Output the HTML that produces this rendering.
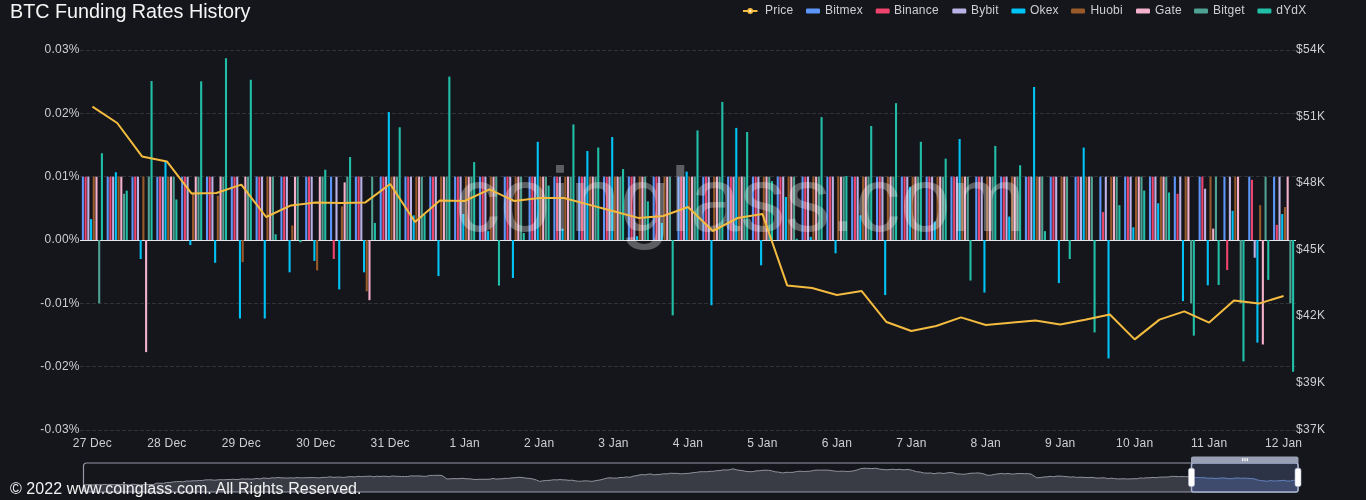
<!DOCTYPE html>
<html lang="en"><head><meta charset="utf-8"><title>BTC Funding Rates History</title>
<style>html,body{margin:0;padding:0;background:#15161b;}body{width:1366px;height:500px;overflow:hidden;position:relative;font-family:"Liberation Sans", Arial, sans-serif;}svg{position:absolute;left:0;top:0;display:block;}#w{position:absolute;left:0;top:0;width:1366px;height:500px;will-change:transform;}text{font-family:"Liberation Sans", Arial, sans-serif;}.ft{position:absolute;left:10px;top:479.5px;font-size:16px;letter-spacing:0.06px;line-height:18px;color:#f2f2f2;white-space:nowrap;}</style></head><body><div id="w">
<svg width="1366" height="500" viewBox="0 0 1366 500">
<rect width="1366" height="500" fill="#15161b"/>
<text x="10" y="18" font-size="19.75" fill="#f6f6f6">BTC Funding Rates History</text>
<line x1="80" x2="1296" y1="50.5" y2="50.5" stroke="#303238" stroke-width="1" stroke-dasharray="4 2" shape-rendering="crispEdges"/>
<line x1="80" x2="1296" y1="113.5" y2="113.5" stroke="#303238" stroke-width="1" stroke-dasharray="4 2" shape-rendering="crispEdges"/>
<line x1="80" x2="1296" y1="176.5" y2="176.5" stroke="#303238" stroke-width="1" stroke-dasharray="4 2" shape-rendering="crispEdges"/>
<line x1="80" x2="1296" y1="303.5" y2="303.5" stroke="#303238" stroke-width="1" stroke-dasharray="4 2" shape-rendering="crispEdges"/>
<line x1="80" x2="1296" y1="366.5" y2="366.5" stroke="#303238" stroke-width="1" stroke-dasharray="4 2" shape-rendering="crispEdges"/>
<line x1="80" x2="1296" y1="430.5" y2="430.5" stroke="#303238" stroke-width="1" stroke-dasharray="4 2" shape-rendering="crispEdges"/>
<text x="79.8" y="52.9" font-size="12" fill="#cfcfd2" text-anchor="end" letter-spacing="0.25">0.03%</text>
<text x="1296" y="52.9" font-size="12" fill="#cfcfd2" letter-spacing="0.3">$54K</text>
<text x="79.8" y="116.9" font-size="12" fill="#cfcfd2" text-anchor="end" letter-spacing="0.25">0.02%</text>
<text x="1296" y="119.9" font-size="12" fill="#cfcfd2" letter-spacing="0.3">$51K</text>
<text x="79.8" y="179.9" font-size="12" fill="#cfcfd2" text-anchor="end" letter-spacing="0.25">0.01%</text>
<text x="1296" y="185.9" font-size="12" fill="#cfcfd2" letter-spacing="0.3">$48K</text>
<text x="79.8" y="242.9" font-size="12" fill="#cfcfd2" text-anchor="end" letter-spacing="0.25">0.00%</text>
<text x="1296" y="252.9" font-size="12" fill="#cfcfd2" letter-spacing="0.3">$45K</text>
<text x="79.8" y="306.9" font-size="12" fill="#cfcfd2" text-anchor="end" letter-spacing="0.25">-0.01%</text>
<text x="1296" y="318.9" font-size="12" fill="#cfcfd2" letter-spacing="0.3">$42K</text>
<text x="79.8" y="369.9" font-size="12" fill="#cfcfd2" text-anchor="end" letter-spacing="0.25">-0.02%</text>
<text x="1296" y="385.9" font-size="12" fill="#cfcfd2" letter-spacing="0.3">$39K</text>
<text x="79.8" y="432.9" font-size="12" fill="#cfcfd2" text-anchor="end" letter-spacing="0.25">-0.03%</text>
<text x="1296" y="432.9" font-size="12" fill="#cfcfd2" letter-spacing="0.3">$37K</text>
<text x="92.41" y="446.5" font-size="12" fill="#cfcfd2" text-anchor="middle" letter-spacing="0.2">27 Dec</text>
<text x="166.86" y="446.5" font-size="12" fill="#cfcfd2" text-anchor="middle" letter-spacing="0.2">28 Dec</text>
<text x="241.31" y="446.5" font-size="12" fill="#cfcfd2" text-anchor="middle" letter-spacing="0.2">29 Dec</text>
<text x="315.76" y="446.5" font-size="12" fill="#cfcfd2" text-anchor="middle" letter-spacing="0.2">30 Dec</text>
<text x="390.2" y="446.5" font-size="12" fill="#cfcfd2" text-anchor="middle" letter-spacing="0.2">31 Dec</text>
<text x="464.65" y="446.5" font-size="12" fill="#cfcfd2" text-anchor="middle" letter-spacing="0.2">1 Jan</text>
<text x="539.1" y="446.5" font-size="12" fill="#cfcfd2" text-anchor="middle" letter-spacing="0.2">2 Jan</text>
<text x="613.55" y="446.5" font-size="12" fill="#cfcfd2" text-anchor="middle" letter-spacing="0.2">3 Jan</text>
<text x="688" y="446.5" font-size="12" fill="#cfcfd2" text-anchor="middle" letter-spacing="0.2">4 Jan</text>
<text x="762.45" y="446.5" font-size="12" fill="#cfcfd2" text-anchor="middle" letter-spacing="0.2">5 Jan</text>
<text x="836.9" y="446.5" font-size="12" fill="#cfcfd2" text-anchor="middle" letter-spacing="0.2">6 Jan</text>
<text x="911.35" y="446.5" font-size="12" fill="#cfcfd2" text-anchor="middle" letter-spacing="0.2">7 Jan</text>
<text x="985.8" y="446.5" font-size="12" fill="#cfcfd2" text-anchor="middle" letter-spacing="0.2">8 Jan</text>
<text x="1060.24" y="446.5" font-size="12" fill="#cfcfd2" text-anchor="middle" letter-spacing="0.2">9 Jan</text>
<text x="1134.69" y="446.5" font-size="12" fill="#cfcfd2" text-anchor="middle" letter-spacing="0.2">10 Jan</text>
<text x="1209.14" y="446.5" font-size="12" fill="#cfcfd2" text-anchor="middle" letter-spacing="0.2">11 Jan</text>
<text x="1283.59" y="446.5" font-size="12" fill="#cfcfd2" text-anchor="middle" letter-spacing="0.2">12 Jan</text>
<line x1="80" x2="1296" y1="240.5" y2="240.5" stroke="#e6e6ea" stroke-width="1" shape-rendering="crispEdges"/>
<g fill="#5c96f9">
<rect x="81.86" y="176.67" width="2.09" height="63.33"/>
<rect x="106.68" y="176.67" width="2.09" height="63.33"/>
<rect x="131.49" y="176.67" width="2.09" height="63.33"/>
<rect x="156.31" y="176.67" width="2.09" height="63.33"/>
<rect x="181.13" y="176.67" width="2.09" height="63.33"/>
<rect x="205.94" y="176.67" width="2.09" height="63.33"/>
<rect x="230.76" y="176.67" width="2.09" height="63.33"/>
<rect x="255.58" y="176.67" width="2.09" height="63.33"/>
<rect x="280.39" y="176.67" width="2.09" height="63.33"/>
<rect x="305.21" y="176.67" width="2.09" height="63.33"/>
<rect x="330.02" y="176.67" width="2.09" height="63.33"/>
<rect x="354.84" y="176.67" width="2.09" height="63.33"/>
<rect x="379.66" y="176.67" width="2.09" height="63.33"/>
<rect x="404.47" y="176.67" width="2.09" height="63.33"/>
<rect x="429.29" y="176.67" width="2.09" height="63.33"/>
<rect x="454.11" y="176.67" width="2.09" height="63.33"/>
<rect x="478.92" y="176.67" width="2.09" height="63.33"/>
<rect x="503.74" y="176.67" width="2.09" height="63.33"/>
<rect x="528.56" y="176.67" width="2.09" height="63.33"/>
<rect x="553.37" y="176.67" width="2.09" height="63.33"/>
<rect x="578.19" y="176.67" width="2.09" height="63.33"/>
<rect x="603" y="176.67" width="2.09" height="63.33"/>
<rect x="627.82" y="176.67" width="2.09" height="63.33"/>
<rect x="652.64" y="176.67" width="2.09" height="63.33"/>
<rect x="677.45" y="176.67" width="2.09" height="63.33"/>
<rect x="702.27" y="176.67" width="2.09" height="63.33"/>
<rect x="727.09" y="176.67" width="2.09" height="63.33"/>
<rect x="751.9" y="176.67" width="2.09" height="63.33"/>
<rect x="776.72" y="176.67" width="2.09" height="63.33"/>
<rect x="801.53" y="176.67" width="2.09" height="63.33"/>
<rect x="826.35" y="176.67" width="2.09" height="63.33"/>
<rect x="851.17" y="176.67" width="2.09" height="63.33"/>
<rect x="875.98" y="176.67" width="2.09" height="63.33"/>
<rect x="900.8" y="176.67" width="2.09" height="63.33"/>
<rect x="925.62" y="176.67" width="2.09" height="63.33"/>
<rect x="950.43" y="176.67" width="2.09" height="63.33"/>
<rect x="975.25" y="176.67" width="2.09" height="63.33"/>
<rect x="1000.07" y="176.67" width="2.09" height="63.33"/>
<rect x="1024.88" y="176.67" width="2.09" height="63.33"/>
<rect x="1049.7" y="176.67" width="2.09" height="63.33"/>
<rect x="1074.51" y="176.67" width="2.09" height="63.33"/>
<rect x="1099.33" y="176.67" width="2.09" height="63.33"/>
<rect x="1124.15" y="176.67" width="2.09" height="63.33"/>
<rect x="1148.96" y="176.67" width="2.09" height="63.33"/>
<rect x="1173.78" y="176.67" width="2.09" height="63.33"/>
<rect x="1198.6" y="176.67" width="2.09" height="63.33"/>
<rect x="1223.41" y="176.67" width="2.09" height="63.33"/>
<rect x="1248.23" y="176.67" width="2.09" height="63.33"/>
<rect x="1273.04" y="176.67" width="2.09" height="63.33"/>
</g>
<g fill="#ee436c">
<rect x="84.58" y="176.67" width="2.09" height="63.33"/>
<rect x="109.39" y="176.67" width="2.09" height="63.33"/>
<rect x="134.21" y="176.67" width="2.09" height="63.33"/>
<rect x="159.03" y="176.67" width="2.09" height="63.33"/>
<rect x="183.84" y="176.67" width="2.09" height="63.33"/>
<rect x="208.66" y="176.67" width="2.09" height="63.33"/>
<rect x="233.47" y="176.67" width="2.09" height="63.33"/>
<rect x="258.29" y="176.67" width="2.09" height="63.33"/>
<rect x="283.11" y="176.67" width="2.09" height="63.33"/>
<rect x="307.92" y="176.67" width="2.09" height="63.33"/>
<rect x="332.74" y="240" width="2.09" height="19"/>
<rect x="357.56" y="176.67" width="2.09" height="63.33"/>
<rect x="382.37" y="176.67" width="2.09" height="63.33"/>
<rect x="407.19" y="176.67" width="2.09" height="63.33"/>
<rect x="432" y="176.67" width="2.09" height="63.33"/>
<rect x="456.82" y="176.67" width="2.09" height="63.33"/>
<rect x="481.64" y="176.67" width="2.09" height="63.33"/>
<rect x="506.45" y="176.67" width="2.09" height="63.33"/>
<rect x="531.27" y="176.67" width="2.09" height="63.33"/>
<rect x="556.09" y="176.67" width="2.09" height="63.33"/>
<rect x="580.9" y="176.67" width="2.09" height="63.33"/>
<rect x="605.72" y="176.67" width="2.09" height="63.33"/>
<rect x="630.54" y="176.67" width="2.09" height="63.33"/>
<rect x="655.35" y="176.67" width="2.09" height="63.33"/>
<rect x="680.17" y="176.67" width="2.09" height="63.33"/>
<rect x="704.98" y="176.67" width="2.09" height="63.33"/>
<rect x="729.8" y="176.67" width="2.09" height="63.33"/>
<rect x="754.62" y="176.67" width="2.09" height="63.33"/>
<rect x="779.43" y="176.67" width="2.09" height="63.33"/>
<rect x="804.25" y="176.67" width="2.09" height="63.33"/>
<rect x="829.07" y="176.67" width="2.09" height="63.33"/>
<rect x="853.88" y="176.67" width="2.09" height="63.33"/>
<rect x="878.7" y="176.67" width="2.09" height="63.33"/>
<rect x="903.52" y="176.67" width="2.09" height="63.33"/>
<rect x="928.33" y="176.67" width="2.09" height="63.33"/>
<rect x="953.15" y="176.67" width="2.09" height="63.33"/>
<rect x="977.96" y="176.67" width="2.09" height="63.33"/>
<rect x="1002.78" y="176.67" width="2.09" height="63.33"/>
<rect x="1027.6" y="176.67" width="2.09" height="63.33"/>
<rect x="1052.41" y="176.67" width="2.09" height="63.33"/>
<rect x="1077.23" y="176.67" width="2.09" height="63.33"/>
<rect x="1102.05" y="212.13" width="2.09" height="27.87"/>
<rect x="1126.86" y="176.67" width="2.09" height="63.33"/>
<rect x="1151.68" y="176.67" width="2.09" height="63.33"/>
<rect x="1176.49" y="193.77" width="2.09" height="46.23"/>
<rect x="1201.31" y="176.67" width="2.09" height="63.33"/>
<rect x="1226.13" y="240" width="2.09" height="30.08"/>
<rect x="1250.94" y="179.83" width="2.09" height="60.17"/>
<rect x="1275.76" y="224.8" width="2.09" height="15.2"/>
</g>
<g fill="#bab2e6">
<rect x="87.29" y="176.67" width="2.09" height="63.33"/>
<rect x="112.11" y="176.67" width="2.09" height="63.33"/>
<rect x="136.92" y="176.67" width="2.09" height="63.33"/>
<rect x="161.74" y="176.67" width="2.09" height="63.33"/>
<rect x="186.56" y="176.67" width="2.09" height="63.33"/>
<rect x="211.37" y="176.67" width="2.09" height="63.33"/>
<rect x="236.19" y="176.67" width="2.09" height="63.33"/>
<rect x="261.01" y="176.67" width="2.09" height="63.33"/>
<rect x="285.82" y="176.67" width="2.09" height="63.33"/>
<rect x="310.64" y="176.67" width="2.09" height="63.33"/>
<rect x="335.45" y="176.67" width="2.09" height="63.33"/>
<rect x="360.27" y="176.67" width="2.09" height="63.33"/>
<rect x="385.09" y="176.67" width="2.09" height="63.33"/>
<rect x="409.9" y="176.67" width="2.09" height="63.33"/>
<rect x="434.72" y="176.67" width="2.09" height="63.33"/>
<rect x="459.54" y="176.67" width="2.09" height="63.33"/>
<rect x="484.35" y="176.67" width="2.09" height="63.33"/>
<rect x="509.17" y="176.67" width="2.09" height="63.33"/>
<rect x="533.99" y="176.67" width="2.09" height="63.33"/>
<rect x="558.8" y="176.67" width="2.09" height="63.33"/>
<rect x="583.62" y="176.67" width="2.09" height="63.33"/>
<rect x="608.43" y="176.67" width="2.09" height="63.33"/>
<rect x="633.25" y="176.67" width="2.09" height="63.33"/>
<rect x="658.07" y="176.67" width="2.09" height="63.33"/>
<rect x="682.88" y="176.67" width="2.09" height="63.33"/>
<rect x="707.7" y="176.67" width="2.09" height="63.33"/>
<rect x="732.52" y="176.67" width="2.09" height="63.33"/>
<rect x="757.33" y="176.67" width="2.09" height="63.33"/>
<rect x="782.15" y="176.67" width="2.09" height="63.33"/>
<rect x="806.96" y="176.67" width="2.09" height="63.33"/>
<rect x="831.78" y="176.67" width="2.09" height="63.33"/>
<rect x="856.6" y="176.67" width="2.09" height="63.33"/>
<rect x="881.41" y="176.67" width="2.09" height="63.33"/>
<rect x="906.23" y="176.67" width="2.09" height="63.33"/>
<rect x="931.05" y="176.67" width="2.09" height="63.33"/>
<rect x="955.86" y="176.67" width="2.09" height="63.33"/>
<rect x="980.68" y="176.67" width="2.09" height="63.33"/>
<rect x="1005.5" y="176.67" width="2.09" height="63.33"/>
<rect x="1030.31" y="176.67" width="2.09" height="63.33"/>
<rect x="1055.13" y="176.67" width="2.09" height="63.33"/>
<rect x="1079.94" y="176.67" width="2.09" height="63.33"/>
<rect x="1104.76" y="176.67" width="2.09" height="63.33"/>
<rect x="1129.58" y="176.67" width="2.09" height="63.33"/>
<rect x="1154.39" y="176.67" width="2.09" height="63.33"/>
<rect x="1179.21" y="176.67" width="2.09" height="63.33"/>
<rect x="1204.03" y="188.7" width="2.09" height="51.3"/>
<rect x="1228.84" y="176.67" width="2.09" height="63.33"/>
<rect x="1253.66" y="240" width="2.09" height="17.73"/>
<rect x="1278.48" y="176.67" width="2.09" height="63.33"/>
</g>
<g fill="#00c3f5">
<rect x="90.01" y="219.1" width="2.09" height="20.9"/>
<rect x="114.82" y="172.23" width="2.09" height="67.77"/>
<rect x="139.64" y="240" width="2.09" height="19"/>
<rect x="164.46" y="161.47" width="2.09" height="78.53"/>
<rect x="189.27" y="240" width="2.09" height="5.07"/>
<rect x="214.09" y="240" width="2.09" height="22.8"/>
<rect x="238.9" y="240" width="2.09" height="78.53"/>
<rect x="263.72" y="240" width="2.09" height="78.53"/>
<rect x="288.54" y="240" width="2.09" height="32.3"/>
<rect x="313.35" y="240" width="2.09" height="20.9"/>
<rect x="338.17" y="240" width="2.09" height="49.4"/>
<rect x="362.99" y="240" width="2.09" height="32.3"/>
<rect x="387.8" y="112.07" width="2.09" height="127.93"/>
<rect x="412.62" y="215.3" width="2.09" height="24.7"/>
<rect x="437.43" y="240" width="2.09" height="36.1"/>
<rect x="462.25" y="214.03" width="2.09" height="25.97"/>
<rect x="487.07" y="231.13" width="2.09" height="8.87"/>
<rect x="511.88" y="240" width="2.09" height="38"/>
<rect x="536.7" y="141.83" width="2.09" height="98.17"/>
<rect x="561.52" y="228.6" width="2.09" height="11.4"/>
<rect x="586.33" y="151.02" width="2.09" height="88.98"/>
<rect x="611.15" y="137.02" width="2.09" height="102.98"/>
<rect x="635.97" y="236.2" width="2.09" height="3.8"/>
<rect x="660.78" y="222.9" width="2.09" height="17.1"/>
<rect x="685.6" y="171.6" width="2.09" height="68.4"/>
<rect x="710.41" y="240" width="2.09" height="65.23"/>
<rect x="735.23" y="127.9" width="2.09" height="112.1"/>
<rect x="760.05" y="240" width="2.09" height="25.33"/>
<rect x="784.86" y="196.93" width="2.09" height="43.07"/>
<rect x="809.68" y="236.83" width="2.09" height="3.17"/>
<rect x="834.5" y="240" width="2.09" height="13.3"/>
<rect x="859.31" y="215.3" width="2.09" height="24.7"/>
<rect x="884.13" y="240" width="2.09" height="55.1"/>
<rect x="908.95" y="186.8" width="2.09" height="53.2"/>
<rect x="933.76" y="221.63" width="2.09" height="18.37"/>
<rect x="958.58" y="138.98" width="2.09" height="101.02"/>
<rect x="983.39" y="240" width="2.09" height="52.57"/>
<rect x="1008.21" y="216.57" width="2.09" height="23.43"/>
<rect x="1033.03" y="86.99" width="2.09" height="153.01"/>
<rect x="1057.84" y="240" width="2.09" height="43.07"/>
<rect x="1082.66" y="147.53" width="2.09" height="92.47"/>
<rect x="1107.48" y="240" width="2.09" height="118.43"/>
<rect x="1132.29" y="227.33" width="2.09" height="12.67"/>
<rect x="1157.11" y="203.27" width="2.09" height="36.73"/>
<rect x="1181.92" y="240" width="2.09" height="61.12"/>
<rect x="1206.74" y="240" width="2.09" height="45.28"/>
<rect x="1231.56" y="210.87" width="2.09" height="29.13"/>
<rect x="1256.37" y="240" width="2.09" height="102.6"/>
<rect x="1281.19" y="214.03" width="2.09" height="25.97"/>
</g>
<g fill="#995a2a">
<rect x="92.72" y="176.67" width="2.09" height="63.33"/>
<rect x="117.54" y="176.67" width="2.09" height="63.33"/>
<rect x="142.35" y="176.67" width="2.09" height="63.33"/>
<rect x="167.17" y="176.67" width="2.09" height="63.33"/>
<rect x="191.99" y="192.5" width="2.09" height="47.5"/>
<rect x="216.8" y="195.67" width="2.09" height="44.33"/>
<rect x="241.62" y="240" width="2.09" height="22.17"/>
<rect x="266.44" y="176.67" width="2.09" height="63.33"/>
<rect x="291.25" y="225.43" width="2.09" height="14.57"/>
<rect x="316.07" y="240" width="2.09" height="30.4"/>
<rect x="340.88" y="206.43" width="2.09" height="33.57"/>
<rect x="365.7" y="240" width="2.09" height="51.3"/>
<rect x="390.52" y="176.67" width="2.09" height="63.33"/>
<rect x="415.33" y="176.67" width="2.09" height="63.33"/>
<rect x="440.15" y="176.67" width="2.09" height="63.33"/>
<rect x="464.97" y="176.67" width="2.09" height="63.33"/>
<rect x="489.78" y="176.67" width="2.09" height="63.33"/>
<rect x="514.6" y="176.67" width="2.09" height="63.33"/>
<rect x="539.42" y="176.67" width="2.09" height="63.33"/>
<rect x="564.23" y="176.67" width="2.09" height="63.33"/>
<rect x="589.05" y="176.67" width="2.09" height="63.33"/>
<rect x="613.86" y="176.67" width="2.09" height="63.33"/>
<rect x="638.68" y="176.67" width="2.09" height="63.33"/>
<rect x="663.5" y="176.67" width="2.09" height="63.33"/>
<rect x="688.31" y="176.67" width="2.09" height="63.33"/>
<rect x="713.13" y="176.67" width="2.09" height="63.33"/>
<rect x="737.95" y="176.67" width="2.09" height="63.33"/>
<rect x="762.76" y="176.67" width="2.09" height="63.33"/>
<rect x="787.58" y="176.67" width="2.09" height="63.33"/>
<rect x="812.39" y="176.67" width="2.09" height="63.33"/>
<rect x="837.21" y="176.67" width="2.09" height="63.33"/>
<rect x="862.03" y="176.67" width="2.09" height="63.33"/>
<rect x="886.84" y="176.67" width="2.09" height="63.33"/>
<rect x="911.66" y="176.67" width="2.09" height="63.33"/>
<rect x="936.48" y="176.67" width="2.09" height="63.33"/>
<rect x="961.29" y="176.67" width="2.09" height="63.33"/>
<rect x="986.11" y="176.67" width="2.09" height="63.33"/>
<rect x="1010.93" y="176.67" width="2.09" height="63.33"/>
<rect x="1035.74" y="176.67" width="2.09" height="63.33"/>
<rect x="1060.56" y="176.67" width="2.09" height="63.33"/>
<rect x="1085.37" y="176.67" width="2.09" height="63.33"/>
<rect x="1110.19" y="176.67" width="2.09" height="63.33"/>
<rect x="1135.01" y="176.67" width="2.09" height="63.33"/>
<rect x="1159.82" y="176.67" width="2.09" height="63.33"/>
<rect x="1184.64" y="176.67" width="2.09" height="63.33"/>
<rect x="1209.46" y="176.67" width="2.09" height="63.33"/>
<rect x="1234.27" y="176.67" width="2.09" height="63.33"/>
<rect x="1259.09" y="205.17" width="2.09" height="34.83"/>
<rect x="1283.91" y="207.07" width="2.09" height="32.93"/>
</g>
<g fill="#f4b1cb">
<rect x="95.44" y="176.67" width="2.09" height="63.33"/>
<rect x="120.25" y="176.67" width="2.09" height="63.33"/>
<rect x="145.07" y="240" width="2.09" height="112.1"/>
<rect x="169.89" y="176.67" width="2.09" height="63.33"/>
<rect x="194.7" y="176.67" width="2.09" height="63.33"/>
<rect x="219.52" y="176.67" width="2.09" height="63.33"/>
<rect x="244.33" y="176.67" width="2.09" height="63.33"/>
<rect x="269.15" y="176.67" width="2.09" height="63.33"/>
<rect x="293.97" y="176.67" width="2.09" height="63.33"/>
<rect x="318.78" y="176.67" width="2.09" height="63.33"/>
<rect x="343.6" y="182.37" width="2.09" height="57.63"/>
<rect x="368.42" y="240" width="2.09" height="60.17"/>
<rect x="393.23" y="176.67" width="2.09" height="63.33"/>
<rect x="418.05" y="176.67" width="2.09" height="63.33"/>
<rect x="442.87" y="176.67" width="2.09" height="63.33"/>
<rect x="467.68" y="176.67" width="2.09" height="63.33"/>
<rect x="492.5" y="176.67" width="2.09" height="63.33"/>
<rect x="517.31" y="176.67" width="2.09" height="63.33"/>
<rect x="542.13" y="176.67" width="2.09" height="63.33"/>
<rect x="566.95" y="176.67" width="2.09" height="63.33"/>
<rect x="591.76" y="176.67" width="2.09" height="63.33"/>
<rect x="616.58" y="176.67" width="2.09" height="63.33"/>
<rect x="641.4" y="176.67" width="2.09" height="63.33"/>
<rect x="666.21" y="176.67" width="2.09" height="63.33"/>
<rect x="691.03" y="176.67" width="2.09" height="63.33"/>
<rect x="715.84" y="176.67" width="2.09" height="63.33"/>
<rect x="740.66" y="176.67" width="2.09" height="63.33"/>
<rect x="765.48" y="176.67" width="2.09" height="63.33"/>
<rect x="790.29" y="176.67" width="2.09" height="63.33"/>
<rect x="815.11" y="176.67" width="2.09" height="63.33"/>
<rect x="839.93" y="176.67" width="2.09" height="63.33"/>
<rect x="864.74" y="176.67" width="2.09" height="63.33"/>
<rect x="889.56" y="176.67" width="2.09" height="63.33"/>
<rect x="914.38" y="176.67" width="2.09" height="63.33"/>
<rect x="939.19" y="176.67" width="2.09" height="63.33"/>
<rect x="964.01" y="176.67" width="2.09" height="63.33"/>
<rect x="988.82" y="176.67" width="2.09" height="63.33"/>
<rect x="1013.64" y="176.67" width="2.09" height="63.33"/>
<rect x="1038.46" y="176.67" width="2.09" height="63.33"/>
<rect x="1063.27" y="176.67" width="2.09" height="63.33"/>
<rect x="1088.09" y="176.67" width="2.09" height="63.33"/>
<rect x="1112.91" y="176.67" width="2.09" height="63.33"/>
<rect x="1137.72" y="176.67" width="2.09" height="63.33"/>
<rect x="1162.54" y="176.67" width="2.09" height="63.33"/>
<rect x="1187.35" y="176.67" width="2.09" height="63.33"/>
<rect x="1212.17" y="228.6" width="2.09" height="11.4"/>
<rect x="1236.99" y="176.67" width="2.09" height="63.33"/>
<rect x="1261.8" y="240" width="2.09" height="104.5"/>
<rect x="1286.62" y="176.67" width="2.09" height="63.33"/>
</g>
<g fill="#4fa293">
<rect x="98.15" y="240" width="2.09" height="63.33"/>
<rect x="122.97" y="193.77" width="2.09" height="46.23"/>
<rect x="147.78" y="176.67" width="2.09" height="63.33"/>
<rect x="172.6" y="176.67" width="2.09" height="63.33"/>
<rect x="197.42" y="176.67" width="2.09" height="63.33"/>
<rect x="222.23" y="176.67" width="2.09" height="63.33"/>
<rect x="247.05" y="176.67" width="2.09" height="63.33"/>
<rect x="271.87" y="176.67" width="2.09" height="63.33"/>
<rect x="296.68" y="176.67" width="2.09" height="63.33"/>
<rect x="321.5" y="176.67" width="2.09" height="63.33"/>
<rect x="346.31" y="176.67" width="2.09" height="63.33"/>
<rect x="371.13" y="176.67" width="2.09" height="63.33"/>
<rect x="395.95" y="176.67" width="2.09" height="63.33"/>
<rect x="420.76" y="176.67" width="2.09" height="63.33"/>
<rect x="445.58" y="176.67" width="2.09" height="63.33"/>
<rect x="470.4" y="176.67" width="2.09" height="63.33"/>
<rect x="495.21" y="176.67" width="2.09" height="63.33"/>
<rect x="520.03" y="176.67" width="2.09" height="63.33"/>
<rect x="544.85" y="176.67" width="2.09" height="63.33"/>
<rect x="569.66" y="176.67" width="2.09" height="63.33"/>
<rect x="594.48" y="176.67" width="2.09" height="63.33"/>
<rect x="619.29" y="176.67" width="2.09" height="63.33"/>
<rect x="644.11" y="176.67" width="2.09" height="63.33"/>
<rect x="668.93" y="176.67" width="2.09" height="63.33"/>
<rect x="693.74" y="176.67" width="2.09" height="63.33"/>
<rect x="718.56" y="176.67" width="2.09" height="63.33"/>
<rect x="743.38" y="176.67" width="2.09" height="63.33"/>
<rect x="768.19" y="176.67" width="2.09" height="63.33"/>
<rect x="793.01" y="176.67" width="2.09" height="63.33"/>
<rect x="817.83" y="176.67" width="2.09" height="63.33"/>
<rect x="842.64" y="176.67" width="2.09" height="63.33"/>
<rect x="867.46" y="176.67" width="2.09" height="63.33"/>
<rect x="892.27" y="176.67" width="2.09" height="63.33"/>
<rect x="917.09" y="176.67" width="2.09" height="63.33"/>
<rect x="941.91" y="176.67" width="2.09" height="63.33"/>
<rect x="966.72" y="176.67" width="2.09" height="63.33"/>
<rect x="991.54" y="176.67" width="2.09" height="63.33"/>
<rect x="1016.36" y="176.67" width="2.09" height="63.33"/>
<rect x="1041.17" y="176.67" width="2.09" height="63.33"/>
<rect x="1065.99" y="176.67" width="2.09" height="63.33"/>
<rect x="1090.8" y="176.67" width="2.09" height="63.33"/>
<rect x="1115.62" y="176.67" width="2.09" height="63.33"/>
<rect x="1140.44" y="176.67" width="2.09" height="63.33"/>
<rect x="1165.25" y="176.67" width="2.09" height="63.33"/>
<rect x="1190.07" y="240" width="2.09" height="63.33"/>
<rect x="1214.89" y="176.67" width="2.09" height="63.33"/>
<rect x="1239.7" y="240" width="2.09" height="63.33"/>
<rect x="1264.52" y="176.67" width="2.09" height="63.33"/>
<rect x="1289.34" y="240" width="2.09" height="63.33"/>
</g>
<g fill="#22bfa8">
<rect x="100.87" y="153.23" width="2.09" height="86.77"/>
<rect x="125.68" y="190.6" width="2.09" height="49.4"/>
<rect x="150.5" y="81.03" width="2.09" height="158.97"/>
<rect x="175.32" y="199.47" width="2.09" height="40.53"/>
<rect x="200.13" y="81.35" width="2.09" height="158.65"/>
<rect x="224.95" y="58.23" width="2.09" height="181.77"/>
<rect x="249.76" y="79.77" width="2.09" height="160.23"/>
<rect x="274.58" y="234.3" width="2.09" height="5.7"/>
<rect x="299.4" y="240" width="2.09" height="2.22"/>
<rect x="324.21" y="169.7" width="2.09" height="70.3"/>
<rect x="349.03" y="157.03" width="2.09" height="82.97"/>
<rect x="373.85" y="222.9" width="2.09" height="17.1"/>
<rect x="398.66" y="127.27" width="2.09" height="112.73"/>
<rect x="423.48" y="214.67" width="2.09" height="25.33"/>
<rect x="448.3" y="76.6" width="2.09" height="163.4"/>
<rect x="473.11" y="162.1" width="2.09" height="77.9"/>
<rect x="497.93" y="240" width="2.09" height="45.6"/>
<rect x="522.74" y="233.03" width="2.09" height="6.97"/>
<rect x="547.56" y="185.53" width="2.09" height="54.47"/>
<rect x="572.38" y="124.42" width="2.09" height="115.58"/>
<rect x="597.19" y="147.53" width="2.09" height="92.47"/>
<rect x="622.01" y="169.07" width="2.09" height="70.93"/>
<rect x="646.83" y="201.37" width="2.09" height="38.63"/>
<rect x="671.64" y="240" width="2.09" height="75.37"/>
<rect x="696.46" y="130.43" width="2.09" height="109.57"/>
<rect x="721.27" y="101.93" width="2.09" height="138.07"/>
<rect x="746.09" y="132.02" width="2.09" height="107.98"/>
<rect x="770.91" y="181.1" width="2.09" height="58.9"/>
<rect x="795.72" y="238.73" width="2.09" height="1.27"/>
<rect x="820.54" y="117.13" width="2.09" height="122.87"/>
<rect x="845.36" y="176.03" width="2.09" height="63.97"/>
<rect x="870.17" y="126" width="2.09" height="114"/>
<rect x="894.99" y="103.2" width="2.09" height="136.8"/>
<rect x="919.81" y="141.83" width="2.09" height="98.17"/>
<rect x="944.62" y="158.62" width="2.09" height="81.38"/>
<rect x="969.44" y="240" width="2.09" height="40.53"/>
<rect x="994.25" y="145.95" width="2.09" height="94.05"/>
<rect x="1019.07" y="165.27" width="2.09" height="74.73"/>
<rect x="1043.89" y="231.13" width="2.09" height="8.87"/>
<rect x="1068.7" y="240" width="2.09" height="19"/>
<rect x="1093.52" y="240" width="2.09" height="92.47"/>
<rect x="1118.34" y="205.17" width="2.09" height="34.83"/>
<rect x="1143.15" y="190.6" width="2.09" height="49.4"/>
<rect x="1167.97" y="192.5" width="2.09" height="47.5"/>
<rect x="1192.78" y="240" width="2.09" height="95.63"/>
<rect x="1217.6" y="240" width="2.09" height="44.97"/>
<rect x="1242.42" y="240" width="2.09" height="121.41"/>
<rect x="1267.23" y="240" width="2.09" height="39.9"/>
<rect x="1292.05" y="240" width="2.09" height="131.73"/>
</g>
<text x="455" y="231" font-size="90" fill="#ffffff" fill-opacity="0.31">coinglass.com</text>
<polyline points="92.41,106.6 117.22,123 142.04,156.4 166.86,161.4 191.67,193.6 216.49,193 241.31,184.6 266.12,217 290.94,205.4 315.76,202.4 340.57,203 365.39,202.4 390.2,184 415.02,222 439.84,200.6 464.65,201 489.47,189.4 514.29,201 539.1,198 563.92,198 588.73,204.6 613.55,211.2 638.37,217.9 663.18,216 688,207 712.82,231 737.63,218 762.45,214 787.27,285.6 812.08,288 836.9,295 861.71,291 886.53,322 911.35,331 936.16,326 960.98,317.4 985.8,325 1010.61,322.7 1035.43,320.4 1060.24,324.4 1085.06,319.7 1109.88,314.5 1134.69,339.4 1159.51,319.6 1184.33,311.4 1209.14,322.6 1233.96,300.6 1258.78,303.6 1283.59,296" fill="none" stroke="#f3bb3f" stroke-width="2" stroke-linejoin="bevel"/>
<line x1="743" x2="757.5" y1="11" y2="11" stroke="#f3bb3f" stroke-width="2"/>
<circle cx="750.2" cy="11" r="2" fill="#fff" stroke="#f3bb3f" stroke-width="1.8"/>
<text x="765" y="14.1" font-size="12" fill="#cfcfd2" letter-spacing="0.2">Price</text>
<rect x="806" y="8.5" width="14" height="5" rx="1.2" fill="#5c96f9"/>
<text x="825" y="14.1" font-size="12" fill="#cfcfd2" letter-spacing="0.2">Bitmex</text>
<rect x="875.7" y="8.5" width="14" height="5" rx="1.2" fill="#ee436c"/>
<text x="894" y="14.1" font-size="12" fill="#cfcfd2" letter-spacing="0.2">Binance</text>
<rect x="952.3" y="8.5" width="14" height="5" rx="1.2" fill="#bab2e6"/>
<text x="971" y="14.1" font-size="12" fill="#cfcfd2" letter-spacing="0.2">Bybit</text>
<rect x="1011.4" y="8.5" width="14" height="5" rx="1.2" fill="#00c3f5"/>
<text x="1030" y="14.1" font-size="12" fill="#cfcfd2" letter-spacing="0.2">Okex</text>
<rect x="1071" y="8.5" width="14" height="5" rx="1.2" fill="#995a2a"/>
<text x="1090.5" y="14.1" font-size="12" fill="#cfcfd2" letter-spacing="0.2">Huobi</text>
<rect x="1136" y="8.5" width="14" height="5" rx="1.2" fill="#f4b1cb"/>
<text x="1155" y="14.1" font-size="12" fill="#cfcfd2" letter-spacing="0.2">Gate</text>
<rect x="1194" y="8.5" width="14" height="5" rx="1.2" fill="#4fa293"/>
<text x="1213" y="14.1" font-size="12" fill="#cfcfd2" letter-spacing="0.2">Bitget</text>
<rect x="1257.4" y="8.5" width="14" height="5" rx="1.2" fill="#22bfa8"/>
<text x="1276.3" y="14.1" font-size="12" fill="#cfcfd2" letter-spacing="0.2">dYdX</text>
<defs><clipPath id="cu"><rect x="83.5" y="463" width="1108" height="29"/></clipPath><clipPath id="cs"><rect x="1191.5" y="463" width="106.5" height="29"/></clipPath></defs>
<g clip-path="url(#cu)"><polygon points="84,484.9 87,484.72 90,484.53 93,485.03 96,484.44 99,484.89 102,484.72 105,484.4 108,484.84 111,484.36 114,484.75 117,484.38 120,484.8 123,484.36 126,484.66 129,485.04 132,484.3 135,484.37 138,484.75 141,485.04 144,484.64 147,484.43 150,484.5 153.33,484.54 156.67,483.18 160,483.2 163.33,483.33 166.67,482.52 170,482.5 173.29,481.9 176.57,481.63 179.86,481.58 183.14,481.84 186.43,480.97 189.71,481.12 193,480.8 196.08,480.83 199.17,480.46 202.25,480.52 205.33,479.93 208.42,479.82 211.5,479.86 214.58,480.22 217.67,479.86 220.75,479.64 223.83,479.8 226.92,479.56 230,479.5 233,479.2 236,479.59 239,479.4 242,478.84 245,479.07 248,478.93 251,479.18 254,478.93 257,478.39 260,478.98 263,478.02 266,478.22 269,478.46 272,477.75 275,477.99 278,477.44 281,477.8 284.22,477.95 287.44,478.02 290.67,477.81 293.89,478.09 297.11,477.5 300.33,477.86 303.56,477.74 306.78,477.7 310,477.6 313.28,477.49 316.56,477.81 319.83,477.84 323.11,477.31 326.39,477.43 329.67,476.76 332.94,477.33 336.22,477.21 339.5,477 342.62,477.45 345.73,477.25 348.85,476.67 351.96,476.73 355.08,476.98 358.19,476.29 361.31,476.69 364.42,476.36 367.54,476.27 370.65,476.17 373.77,476.85 376.88,476.17 380,476.5 383.08,476.21 386.15,476.31 389.23,476.76 392.31,475.93 395.38,476.26 398.46,476.32 401.54,476.61 404.62,476.51 407.69,476.52 410.77,475.89 413.85,475.99 416.92,475.9 420,476 423.14,476.31 426.29,476.31 429.43,475.44 432.57,475.39 435.71,475.37 438.86,475.3 442,475.5 447,479 450.5,478.78 454,478.6 457,478.76 460,478.5 463,478.31 466,478.8 469,478.82 472,479.09 475,479.54 478,479.35 481,479.25 484,479.3 487,479.27 490,479.19 493,478.43 496,479.13 499,478.87 502,478.82 505,478.3 508.4,478.44 511.8,477.87 515.2,477.72 518.6,477.26 522,477.5 526,478.13 530,478.5 533.2,479.03 536.4,480 539.6,481.4 543.08,480.81 546.56,480.46 550.04,480.34 553.52,479.75 557,479.9 560,479.55 563,479.85 566,479.95 569,480.36 572,480.18 575,480.8 578.4,481.29 581.8,481.15 585.2,480.81 588.6,481.03 592,481.4 596,480.55 600,480 603.33,479.13 606.67,478.16 610,477.8 613.33,478.07 616.67,478.13 620,477.52 623.33,477.45 626.67,476.97 630,477.3 633,476.23 636,475.79 639,475.04 642,474.6 645,474.9 648,474.19 651,474.02 654,474.92 657,474.46 660,474.4 663.5,473.8 667,473.94 670.5,473.18 674,473.4 677.2,473.39 680.4,473.8 683.6,473.64 686.8,473.44 690,473.2 693.38,472.59 696.75,472.32 700.12,471.74 703.5,471.7 706.8,471.75 710.1,471.29 713.4,471.32 716.7,470.65 720,470.6 723.25,469.87 726.5,470.01 729.75,469.73 733,468.8 736,469.72 739,470.24 742,470.5 746,471.42 750,471.7 753,471.64 756,470.83 759,470.82 762,470.36 765,470.2 768.33,470.26 771.67,470.79 775,471.8 778.8,472.13 782.6,472.9 786.08,472.32 789.56,472.41 793.04,472.34 796.52,471.49 800,471.2 803.45,471.47 806.9,471.35 810.35,471.16 813.8,470.4 817.25,470.09 820.7,470.2 823.84,470.06 826.99,470.16 830.13,470.3 833.28,470.86 836.42,471.27 839.57,471.34 842.71,471.11 845.86,471.42 849,471.4 853,471 857,470 860.5,468.68 864,468.2 867.87,468.36 871.73,468.61 875.6,468.2 879.8,469.18 884,469.6 887,469.81 890,469.5 893,469.17 896,469.74 899,469.25 902,469.68 905,469.81 908,469.3 912.3,470.4 916.6,471.7 920.08,472 923.56,472.95 927.04,473.12 930.52,472.97 934,473.7 937,473.11 940,472.91 943,473.44 946,473.13 949,472.6 952.87,472.71 956.73,473.86 960.6,474 964.08,474.26 967.56,473.72 971.04,473.19 974.52,473.17 978,472.9 981,473.3 984,473.95 987,475.2 990.62,475.22 994.25,474.45 997.88,473.88 1001.5,473.4 1004.78,473.9 1008.06,473.47 1011.33,473.97 1014.61,473.99 1017.89,473.44 1021.17,473.55 1024.44,473.66 1027.72,473.67 1031,474 1036.7,477.8 1040.08,477.6 1043.47,476.99 1046.85,476.87 1050.23,476.3 1053.62,476.79 1057,476.1 1060.29,476.11 1063.57,476.37 1066.86,476.65 1070.14,477.13 1073.43,476.81 1076.71,477.46 1080,477.2 1083,477.35 1086,477.53 1089,477.67 1092,477.32 1095,477.89 1098,478.1 1101.28,477.88 1104.56,477.8 1107.83,478.7 1111.11,478.17 1114.39,478.57 1117.67,478.93 1120.94,478.86 1124.22,478.73 1127.5,479 1130.71,478.85 1133.93,478.71 1137.14,478.77 1140.36,477.92 1143.57,478.2 1146.79,477.72 1150,477.8 1153.06,477.38 1156.11,477.67 1159.17,477.21 1162.23,477.06 1165.29,477.06 1168.34,477.01 1171.4,476.4 1174.92,476.4 1178.44,476.63 1181.96,476.59 1185.48,476.65 1189,476.7 1192.25,477.29 1195.5,477.5 1198.56,477.53 1201.62,477.68 1204.69,477.7 1207.75,478.24 1210.81,478.07 1213.88,478.33 1216.94,478.47 1220,478.1 1223.06,477.91 1226.12,478.26 1229.18,478.69 1232.24,478.64 1235.3,477.99 1238.36,478.02 1241.42,478.39 1244.48,478.07 1247.54,478.29 1250.6,478.6 1253.95,478.75 1257.3,479.92 1260.65,480.61 1264,480.9 1267.2,481.26 1270.4,480.47 1273.6,481 1276.8,480.9 1280,480.7 1283.4,480.3 1286.8,481 1290.2,481.05 1293.6,480.26 1297,480.5 1298,492 83.5,492" fill="#3a3c45"/><polyline points="84,484.9 87,484.72 90,484.53 93,485.03 96,484.44 99,484.89 102,484.72 105,484.4 108,484.84 111,484.36 114,484.75 117,484.38 120,484.8 123,484.36 126,484.66 129,485.04 132,484.3 135,484.37 138,484.75 141,485.04 144,484.64 147,484.43 150,484.5 153.33,484.54 156.67,483.18 160,483.2 163.33,483.33 166.67,482.52 170,482.5 173.29,481.9 176.57,481.63 179.86,481.58 183.14,481.84 186.43,480.97 189.71,481.12 193,480.8 196.08,480.83 199.17,480.46 202.25,480.52 205.33,479.93 208.42,479.82 211.5,479.86 214.58,480.22 217.67,479.86 220.75,479.64 223.83,479.8 226.92,479.56 230,479.5 233,479.2 236,479.59 239,479.4 242,478.84 245,479.07 248,478.93 251,479.18 254,478.93 257,478.39 260,478.98 263,478.02 266,478.22 269,478.46 272,477.75 275,477.99 278,477.44 281,477.8 284.22,477.95 287.44,478.02 290.67,477.81 293.89,478.09 297.11,477.5 300.33,477.86 303.56,477.74 306.78,477.7 310,477.6 313.28,477.49 316.56,477.81 319.83,477.84 323.11,477.31 326.39,477.43 329.67,476.76 332.94,477.33 336.22,477.21 339.5,477 342.62,477.45 345.73,477.25 348.85,476.67 351.96,476.73 355.08,476.98 358.19,476.29 361.31,476.69 364.42,476.36 367.54,476.27 370.65,476.17 373.77,476.85 376.88,476.17 380,476.5 383.08,476.21 386.15,476.31 389.23,476.76 392.31,475.93 395.38,476.26 398.46,476.32 401.54,476.61 404.62,476.51 407.69,476.52 410.77,475.89 413.85,475.99 416.92,475.9 420,476 423.14,476.31 426.29,476.31 429.43,475.44 432.57,475.39 435.71,475.37 438.86,475.3 442,475.5 447,479 450.5,478.78 454,478.6 457,478.76 460,478.5 463,478.31 466,478.8 469,478.82 472,479.09 475,479.54 478,479.35 481,479.25 484,479.3 487,479.27 490,479.19 493,478.43 496,479.13 499,478.87 502,478.82 505,478.3 508.4,478.44 511.8,477.87 515.2,477.72 518.6,477.26 522,477.5 526,478.13 530,478.5 533.2,479.03 536.4,480 539.6,481.4 543.08,480.81 546.56,480.46 550.04,480.34 553.52,479.75 557,479.9 560,479.55 563,479.85 566,479.95 569,480.36 572,480.18 575,480.8 578.4,481.29 581.8,481.15 585.2,480.81 588.6,481.03 592,481.4 596,480.55 600,480 603.33,479.13 606.67,478.16 610,477.8 613.33,478.07 616.67,478.13 620,477.52 623.33,477.45 626.67,476.97 630,477.3 633,476.23 636,475.79 639,475.04 642,474.6 645,474.9 648,474.19 651,474.02 654,474.92 657,474.46 660,474.4 663.5,473.8 667,473.94 670.5,473.18 674,473.4 677.2,473.39 680.4,473.8 683.6,473.64 686.8,473.44 690,473.2 693.38,472.59 696.75,472.32 700.12,471.74 703.5,471.7 706.8,471.75 710.1,471.29 713.4,471.32 716.7,470.65 720,470.6 723.25,469.87 726.5,470.01 729.75,469.73 733,468.8 736,469.72 739,470.24 742,470.5 746,471.42 750,471.7 753,471.64 756,470.83 759,470.82 762,470.36 765,470.2 768.33,470.26 771.67,470.79 775,471.8 778.8,472.13 782.6,472.9 786.08,472.32 789.56,472.41 793.04,472.34 796.52,471.49 800,471.2 803.45,471.47 806.9,471.35 810.35,471.16 813.8,470.4 817.25,470.09 820.7,470.2 823.84,470.06 826.99,470.16 830.13,470.3 833.28,470.86 836.42,471.27 839.57,471.34 842.71,471.11 845.86,471.42 849,471.4 853,471 857,470 860.5,468.68 864,468.2 867.87,468.36 871.73,468.61 875.6,468.2 879.8,469.18 884,469.6 887,469.81 890,469.5 893,469.17 896,469.74 899,469.25 902,469.68 905,469.81 908,469.3 912.3,470.4 916.6,471.7 920.08,472 923.56,472.95 927.04,473.12 930.52,472.97 934,473.7 937,473.11 940,472.91 943,473.44 946,473.13 949,472.6 952.87,472.71 956.73,473.86 960.6,474 964.08,474.26 967.56,473.72 971.04,473.19 974.52,473.17 978,472.9 981,473.3 984,473.95 987,475.2 990.62,475.22 994.25,474.45 997.88,473.88 1001.5,473.4 1004.78,473.9 1008.06,473.47 1011.33,473.97 1014.61,473.99 1017.89,473.44 1021.17,473.55 1024.44,473.66 1027.72,473.67 1031,474 1036.7,477.8 1040.08,477.6 1043.47,476.99 1046.85,476.87 1050.23,476.3 1053.62,476.79 1057,476.1 1060.29,476.11 1063.57,476.37 1066.86,476.65 1070.14,477.13 1073.43,476.81 1076.71,477.46 1080,477.2 1083,477.35 1086,477.53 1089,477.67 1092,477.32 1095,477.89 1098,478.1 1101.28,477.88 1104.56,477.8 1107.83,478.7 1111.11,478.17 1114.39,478.57 1117.67,478.93 1120.94,478.86 1124.22,478.73 1127.5,479 1130.71,478.85 1133.93,478.71 1137.14,478.77 1140.36,477.92 1143.57,478.2 1146.79,477.72 1150,477.8 1153.06,477.38 1156.11,477.67 1159.17,477.21 1162.23,477.06 1165.29,477.06 1168.34,477.01 1171.4,476.4 1174.92,476.4 1178.44,476.63 1181.96,476.59 1185.48,476.65 1189,476.7 1192.25,477.29 1195.5,477.5 1198.56,477.53 1201.62,477.68 1204.69,477.7 1207.75,478.24 1210.81,478.07 1213.88,478.33 1216.94,478.47 1220,478.1 1223.06,477.91 1226.12,478.26 1229.18,478.69 1232.24,478.64 1235.3,477.99 1238.36,478.02 1241.42,478.39 1244.48,478.07 1247.54,478.29 1250.6,478.6 1253.95,478.75 1257.3,479.92 1260.65,480.61 1264,480.9 1267.2,481.26 1270.4,480.47 1273.6,481 1276.8,480.9 1280,480.7 1283.4,480.3 1286.8,481 1290.2,481.05 1293.6,480.26 1297,480.5" fill="none" stroke="#90929b" stroke-width="1"/></g>
<rect x="83.5" y="463" width="1214.5" height="29" rx="3" fill="none" stroke="#9498a7" stroke-width="1.2"/>
<rect x="1191.5" y="463" width="106.5" height="29" fill="#2d3347"/>
<g clip-path="url(#cs)"><polygon points="84,484.9 87,484.72 90,484.53 93,485.03 96,484.44 99,484.89 102,484.72 105,484.4 108,484.84 111,484.36 114,484.75 117,484.38 120,484.8 123,484.36 126,484.66 129,485.04 132,484.3 135,484.37 138,484.75 141,485.04 144,484.64 147,484.43 150,484.5 153.33,484.54 156.67,483.18 160,483.2 163.33,483.33 166.67,482.52 170,482.5 173.29,481.9 176.57,481.63 179.86,481.58 183.14,481.84 186.43,480.97 189.71,481.12 193,480.8 196.08,480.83 199.17,480.46 202.25,480.52 205.33,479.93 208.42,479.82 211.5,479.86 214.58,480.22 217.67,479.86 220.75,479.64 223.83,479.8 226.92,479.56 230,479.5 233,479.2 236,479.59 239,479.4 242,478.84 245,479.07 248,478.93 251,479.18 254,478.93 257,478.39 260,478.98 263,478.02 266,478.22 269,478.46 272,477.75 275,477.99 278,477.44 281,477.8 284.22,477.95 287.44,478.02 290.67,477.81 293.89,478.09 297.11,477.5 300.33,477.86 303.56,477.74 306.78,477.7 310,477.6 313.28,477.49 316.56,477.81 319.83,477.84 323.11,477.31 326.39,477.43 329.67,476.76 332.94,477.33 336.22,477.21 339.5,477 342.62,477.45 345.73,477.25 348.85,476.67 351.96,476.73 355.08,476.98 358.19,476.29 361.31,476.69 364.42,476.36 367.54,476.27 370.65,476.17 373.77,476.85 376.88,476.17 380,476.5 383.08,476.21 386.15,476.31 389.23,476.76 392.31,475.93 395.38,476.26 398.46,476.32 401.54,476.61 404.62,476.51 407.69,476.52 410.77,475.89 413.85,475.99 416.92,475.9 420,476 423.14,476.31 426.29,476.31 429.43,475.44 432.57,475.39 435.71,475.37 438.86,475.3 442,475.5 447,479 450.5,478.78 454,478.6 457,478.76 460,478.5 463,478.31 466,478.8 469,478.82 472,479.09 475,479.54 478,479.35 481,479.25 484,479.3 487,479.27 490,479.19 493,478.43 496,479.13 499,478.87 502,478.82 505,478.3 508.4,478.44 511.8,477.87 515.2,477.72 518.6,477.26 522,477.5 526,478.13 530,478.5 533.2,479.03 536.4,480 539.6,481.4 543.08,480.81 546.56,480.46 550.04,480.34 553.52,479.75 557,479.9 560,479.55 563,479.85 566,479.95 569,480.36 572,480.18 575,480.8 578.4,481.29 581.8,481.15 585.2,480.81 588.6,481.03 592,481.4 596,480.55 600,480 603.33,479.13 606.67,478.16 610,477.8 613.33,478.07 616.67,478.13 620,477.52 623.33,477.45 626.67,476.97 630,477.3 633,476.23 636,475.79 639,475.04 642,474.6 645,474.9 648,474.19 651,474.02 654,474.92 657,474.46 660,474.4 663.5,473.8 667,473.94 670.5,473.18 674,473.4 677.2,473.39 680.4,473.8 683.6,473.64 686.8,473.44 690,473.2 693.38,472.59 696.75,472.32 700.12,471.74 703.5,471.7 706.8,471.75 710.1,471.29 713.4,471.32 716.7,470.65 720,470.6 723.25,469.87 726.5,470.01 729.75,469.73 733,468.8 736,469.72 739,470.24 742,470.5 746,471.42 750,471.7 753,471.64 756,470.83 759,470.82 762,470.36 765,470.2 768.33,470.26 771.67,470.79 775,471.8 778.8,472.13 782.6,472.9 786.08,472.32 789.56,472.41 793.04,472.34 796.52,471.49 800,471.2 803.45,471.47 806.9,471.35 810.35,471.16 813.8,470.4 817.25,470.09 820.7,470.2 823.84,470.06 826.99,470.16 830.13,470.3 833.28,470.86 836.42,471.27 839.57,471.34 842.71,471.11 845.86,471.42 849,471.4 853,471 857,470 860.5,468.68 864,468.2 867.87,468.36 871.73,468.61 875.6,468.2 879.8,469.18 884,469.6 887,469.81 890,469.5 893,469.17 896,469.74 899,469.25 902,469.68 905,469.81 908,469.3 912.3,470.4 916.6,471.7 920.08,472 923.56,472.95 927.04,473.12 930.52,472.97 934,473.7 937,473.11 940,472.91 943,473.44 946,473.13 949,472.6 952.87,472.71 956.73,473.86 960.6,474 964.08,474.26 967.56,473.72 971.04,473.19 974.52,473.17 978,472.9 981,473.3 984,473.95 987,475.2 990.62,475.22 994.25,474.45 997.88,473.88 1001.5,473.4 1004.78,473.9 1008.06,473.47 1011.33,473.97 1014.61,473.99 1017.89,473.44 1021.17,473.55 1024.44,473.66 1027.72,473.67 1031,474 1036.7,477.8 1040.08,477.6 1043.47,476.99 1046.85,476.87 1050.23,476.3 1053.62,476.79 1057,476.1 1060.29,476.11 1063.57,476.37 1066.86,476.65 1070.14,477.13 1073.43,476.81 1076.71,477.46 1080,477.2 1083,477.35 1086,477.53 1089,477.67 1092,477.32 1095,477.89 1098,478.1 1101.28,477.88 1104.56,477.8 1107.83,478.7 1111.11,478.17 1114.39,478.57 1117.67,478.93 1120.94,478.86 1124.22,478.73 1127.5,479 1130.71,478.85 1133.93,478.71 1137.14,478.77 1140.36,477.92 1143.57,478.2 1146.79,477.72 1150,477.8 1153.06,477.38 1156.11,477.67 1159.17,477.21 1162.23,477.06 1165.29,477.06 1168.34,477.01 1171.4,476.4 1174.92,476.4 1178.44,476.63 1181.96,476.59 1185.48,476.65 1189,476.7 1192.25,477.29 1195.5,477.5 1198.56,477.53 1201.62,477.68 1204.69,477.7 1207.75,478.24 1210.81,478.07 1213.88,478.33 1216.94,478.47 1220,478.1 1223.06,477.91 1226.12,478.26 1229.18,478.69 1232.24,478.64 1235.3,477.99 1238.36,478.02 1241.42,478.39 1244.48,478.07 1247.54,478.29 1250.6,478.6 1253.95,478.75 1257.3,479.92 1260.65,480.61 1264,480.9 1267.2,481.26 1270.4,480.47 1273.6,481 1276.8,480.9 1280,480.7 1283.4,480.3 1286.8,481 1290.2,481.05 1293.6,480.26 1297,480.5 1298,492 83.5,492" fill="#3e4b6c"/><polyline points="84,484.9 87,484.72 90,484.53 93,485.03 96,484.44 99,484.89 102,484.72 105,484.4 108,484.84 111,484.36 114,484.75 117,484.38 120,484.8 123,484.36 126,484.66 129,485.04 132,484.3 135,484.37 138,484.75 141,485.04 144,484.64 147,484.43 150,484.5 153.33,484.54 156.67,483.18 160,483.2 163.33,483.33 166.67,482.52 170,482.5 173.29,481.9 176.57,481.63 179.86,481.58 183.14,481.84 186.43,480.97 189.71,481.12 193,480.8 196.08,480.83 199.17,480.46 202.25,480.52 205.33,479.93 208.42,479.82 211.5,479.86 214.58,480.22 217.67,479.86 220.75,479.64 223.83,479.8 226.92,479.56 230,479.5 233,479.2 236,479.59 239,479.4 242,478.84 245,479.07 248,478.93 251,479.18 254,478.93 257,478.39 260,478.98 263,478.02 266,478.22 269,478.46 272,477.75 275,477.99 278,477.44 281,477.8 284.22,477.95 287.44,478.02 290.67,477.81 293.89,478.09 297.11,477.5 300.33,477.86 303.56,477.74 306.78,477.7 310,477.6 313.28,477.49 316.56,477.81 319.83,477.84 323.11,477.31 326.39,477.43 329.67,476.76 332.94,477.33 336.22,477.21 339.5,477 342.62,477.45 345.73,477.25 348.85,476.67 351.96,476.73 355.08,476.98 358.19,476.29 361.31,476.69 364.42,476.36 367.54,476.27 370.65,476.17 373.77,476.85 376.88,476.17 380,476.5 383.08,476.21 386.15,476.31 389.23,476.76 392.31,475.93 395.38,476.26 398.46,476.32 401.54,476.61 404.62,476.51 407.69,476.52 410.77,475.89 413.85,475.99 416.92,475.9 420,476 423.14,476.31 426.29,476.31 429.43,475.44 432.57,475.39 435.71,475.37 438.86,475.3 442,475.5 447,479 450.5,478.78 454,478.6 457,478.76 460,478.5 463,478.31 466,478.8 469,478.82 472,479.09 475,479.54 478,479.35 481,479.25 484,479.3 487,479.27 490,479.19 493,478.43 496,479.13 499,478.87 502,478.82 505,478.3 508.4,478.44 511.8,477.87 515.2,477.72 518.6,477.26 522,477.5 526,478.13 530,478.5 533.2,479.03 536.4,480 539.6,481.4 543.08,480.81 546.56,480.46 550.04,480.34 553.52,479.75 557,479.9 560,479.55 563,479.85 566,479.95 569,480.36 572,480.18 575,480.8 578.4,481.29 581.8,481.15 585.2,480.81 588.6,481.03 592,481.4 596,480.55 600,480 603.33,479.13 606.67,478.16 610,477.8 613.33,478.07 616.67,478.13 620,477.52 623.33,477.45 626.67,476.97 630,477.3 633,476.23 636,475.79 639,475.04 642,474.6 645,474.9 648,474.19 651,474.02 654,474.92 657,474.46 660,474.4 663.5,473.8 667,473.94 670.5,473.18 674,473.4 677.2,473.39 680.4,473.8 683.6,473.64 686.8,473.44 690,473.2 693.38,472.59 696.75,472.32 700.12,471.74 703.5,471.7 706.8,471.75 710.1,471.29 713.4,471.32 716.7,470.65 720,470.6 723.25,469.87 726.5,470.01 729.75,469.73 733,468.8 736,469.72 739,470.24 742,470.5 746,471.42 750,471.7 753,471.64 756,470.83 759,470.82 762,470.36 765,470.2 768.33,470.26 771.67,470.79 775,471.8 778.8,472.13 782.6,472.9 786.08,472.32 789.56,472.41 793.04,472.34 796.52,471.49 800,471.2 803.45,471.47 806.9,471.35 810.35,471.16 813.8,470.4 817.25,470.09 820.7,470.2 823.84,470.06 826.99,470.16 830.13,470.3 833.28,470.86 836.42,471.27 839.57,471.34 842.71,471.11 845.86,471.42 849,471.4 853,471 857,470 860.5,468.68 864,468.2 867.87,468.36 871.73,468.61 875.6,468.2 879.8,469.18 884,469.6 887,469.81 890,469.5 893,469.17 896,469.74 899,469.25 902,469.68 905,469.81 908,469.3 912.3,470.4 916.6,471.7 920.08,472 923.56,472.95 927.04,473.12 930.52,472.97 934,473.7 937,473.11 940,472.91 943,473.44 946,473.13 949,472.6 952.87,472.71 956.73,473.86 960.6,474 964.08,474.26 967.56,473.72 971.04,473.19 974.52,473.17 978,472.9 981,473.3 984,473.95 987,475.2 990.62,475.22 994.25,474.45 997.88,473.88 1001.5,473.4 1004.78,473.9 1008.06,473.47 1011.33,473.97 1014.61,473.99 1017.89,473.44 1021.17,473.55 1024.44,473.66 1027.72,473.67 1031,474 1036.7,477.8 1040.08,477.6 1043.47,476.99 1046.85,476.87 1050.23,476.3 1053.62,476.79 1057,476.1 1060.29,476.11 1063.57,476.37 1066.86,476.65 1070.14,477.13 1073.43,476.81 1076.71,477.46 1080,477.2 1083,477.35 1086,477.53 1089,477.67 1092,477.32 1095,477.89 1098,478.1 1101.28,477.88 1104.56,477.8 1107.83,478.7 1111.11,478.17 1114.39,478.57 1117.67,478.93 1120.94,478.86 1124.22,478.73 1127.5,479 1130.71,478.85 1133.93,478.71 1137.14,478.77 1140.36,477.92 1143.57,478.2 1146.79,477.72 1150,477.8 1153.06,477.38 1156.11,477.67 1159.17,477.21 1162.23,477.06 1165.29,477.06 1168.34,477.01 1171.4,476.4 1174.92,476.4 1178.44,476.63 1181.96,476.59 1185.48,476.65 1189,476.7 1192.25,477.29 1195.5,477.5 1198.56,477.53 1201.62,477.68 1204.69,477.7 1207.75,478.24 1210.81,478.07 1213.88,478.33 1216.94,478.47 1220,478.1 1223.06,477.91 1226.12,478.26 1229.18,478.69 1232.24,478.64 1235.3,477.99 1238.36,478.02 1241.42,478.39 1244.48,478.07 1247.54,478.29 1250.6,478.6 1253.95,478.75 1257.3,479.92 1260.65,480.61 1264,480.9 1267.2,481.26 1270.4,480.47 1273.6,481 1276.8,480.9 1280,480.7 1283.4,480.3 1286.8,481 1290.2,481.05 1293.6,480.26 1297,480.5" fill="none" stroke="#6482be" stroke-width="1"/></g>
<rect x="1191.5" y="463" width="106.5" height="29" rx="2" fill="none" stroke="#aab5d3" stroke-width="1.5"/>
<path d="M1191 463 V458.5 a2 2 0 0 1 2 -2 H1296.5 a2 2 0 0 1 2 2 V463 Z" fill="#9aa0b3"/>
<rect x="1242.1" y="458.2" width="1.2" height="3" fill="#fff"/>
<rect x="1244.4" y="458.2" width="1.2" height="3" fill="#fff"/>
<rect x="1246.7" y="458.2" width="1.2" height="3" fill="#fff"/>
<rect x="1188.5" y="468.2" width="6" height="18.4" rx="2" fill="#fff" stroke="#aeb6cc" stroke-width="0.6"/>
<rect x="1295" y="468.2" width="6" height="18.4" rx="2" fill="#fff" stroke="#aeb6cc" stroke-width="0.6"/>
</svg>
<div class="ft">© 2022 www.coinglass.com. All Rights Reserved.</div>
</div></body></html>
